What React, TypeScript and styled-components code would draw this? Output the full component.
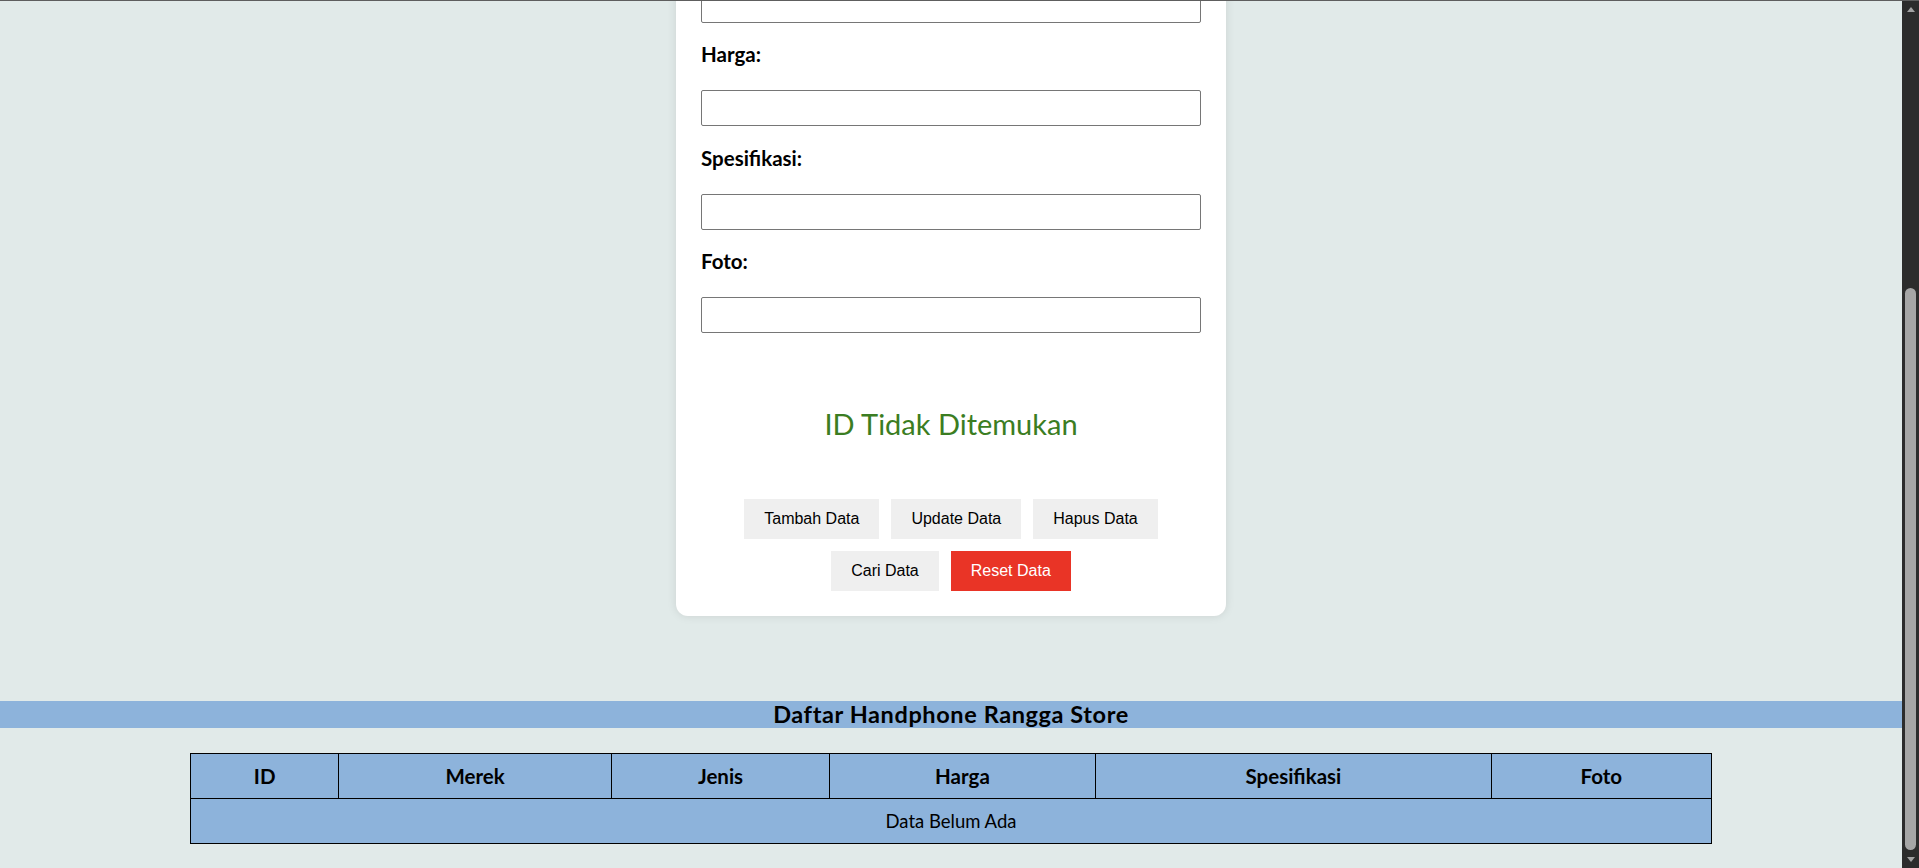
import React from "react";
import styled, { createGlobalStyle } from "styled-components";

const GlobalStyle = createGlobalStyle`
  html, body {
    margin: 0;
    height: 100%;
    background: #e1eae9;
  }
  body {
    font-family: Lato, "Open Sans", sans-serif;
    color: #000;
    overflow: hidden;
  }
  #root {
    height: 100%;
  }
  * {
    box-sizing: border-box;
  }
`;

/* Browser frame: the scrolled page on the left, a scrollbar on the right */
const Frame = styled.div`
  display: flex;
  height: 100vh;
  border-top: 1px solid #5e5e5e;
  overflow: hidden;
`;

/* Scrolled to the bottom: content is anchored at the lower edge */
const Viewport = styled.div`
  flex: 1;
  min-width: 0;
  display: flex;
  flex-direction: column;
  justify-content: flex-end;
  overflow: hidden;
`;

const Scrollbar = styled.div`
  width: 17px;
  flex-shrink: 0;
  display: flex;
  flex-direction: column;
  background: #2c2c2c;
`;

const ScrollArrow = styled.div<{ $down?: boolean }>`
  height: 17px;
  flex-shrink: 0;
  display: flex;
  align-items: center;
  justify-content: center;
  &::before {
    content: "";
    width: 0;
    height: 0;
    border-left: 4.5px solid transparent;
    border-right: 4.5px solid transparent;
    ${(p) =>
      p.$down
        ? "border-top: 5px solid #a3a3a3;"
        : "border-bottom: 5px solid #a3a3a3;"}
  }
`;

const ScrollTrack = styled.div`
  flex: 1;
  display: flex;
  flex-direction: column;
  justify-content: flex-end;
  padding: 0 3px 1px;
`;

const ScrollThumb = styled.div`
  width: 100%;
  background: #a6a6a6;
  border-radius: 6px;
`;

const Page = styled.main`
  flex-shrink: 0;
  display: flex;
  flex-direction: column;
  align-items: center;
  padding: 40px 0 24px;
`;

const Card = styled.section`
  width: 550px;
  padding: 25px;
  background: #ffffff;
  border-radius: 12px;
  box-shadow: 0 0 10px rgba(0, 0, 0, 0.1);
`;

const Field = styled.div`
  display: flex;
  flex-direction: column;
  & + & {
    margin-top: 19.5px;
  }
`;

const Label = styled.label`
  display: block;
  font-size: 20.5px;
  line-height: 24px;
  font-weight: 700;
  margin-bottom: 24px;
`;

const Input = styled.input`
  display: block;
  width: 100%;
  height: 36px;
  border: 1px solid #767676;
  border-radius: 2px;
  background: #fff;
  font-size: 16px;
  padding: 4px 8px;
`;

const Message = styled.p`
  margin: 73px 0 57px;
  text-align: center;
  font-size: 29px;
  line-height: 36px;
  font-weight: 400;
  color: #3b7d22;
`;

const ButtonGroup = styled.div`
  display: flex;
  flex-wrap: wrap;
  justify-content: center;
  gap: 12px;
`;

const ActionButton = styled.button<{ $danger?: boolean }>`
  border: none;
  padding: 11px 20px;
  font-family: "Liberation Sans", Arial, sans-serif;
  font-size: 16px;
  line-height: 18px;
  background: ${(p) => (p.$danger ? "#e93426" : "#efefef")};
  color: ${(p) => (p.$danger ? "#ffffff" : "#000000")};
  cursor: pointer;
`;

const SectionBar = styled.h2`
  align-self: stretch;
  margin: 85px 0 25px;
  background: #8db3db;
  text-align: center;
  font-size: 23.5px;
  letter-spacing: 0.6px;
  line-height: 27px;
  font-weight: 700;
  color: #000;
`;

const Table = styled.table`
  width: 80%;
  border-collapse: collapse;
  background: #8db3db;
  border: 1px solid #000;
`;

const HeadCell = styled.th<{ $w: string }>`
  width: ${(p) => p.$w};
  border: 1px solid #000;
  padding: 12px 8px;
  font-size: 20.5px;
  line-height: 20px;
  font-weight: 700;
  text-align: center;
`;

const EmptyCell = styled.td`
  border: 1px solid #000;
  padding: 12px 8px;
  font-size: 18.5px;
  line-height: 20px;
  text-align: center;
`;

const fields = ["Jenis", "Harga", "Spesifikasi", "Foto"];

const columns: { name: string; w: string }[] = [
  { name: "ID", w: "9.73%" },
  { name: "Merek", w: "17.95%" },
  { name: "Jenis", w: "14.33%" },
  { name: "Harga", w: "17.49%" },
  { name: "Spesifikasi", w: "26.04%" },
  { name: "Foto", w: "14.46%" },
];

export default function App() {
  return (
    <>
      <GlobalStyle />
      <Frame>
        <Viewport>
          <Page>
            <Card>
              {fields.map((f) => (
                <Field key={f}>
                  <Label htmlFor={`field-${f}`}>{f}:</Label>
                  <Input id={`field-${f}`} type="text" />
                </Field>
              ))}
              <Message>ID Tidak Ditemukan</Message>
              <ButtonGroup>
                <ActionButton>Tambah Data</ActionButton>
                <ActionButton>Update Data</ActionButton>
                <ActionButton>Hapus Data</ActionButton>
                <ActionButton>Cari Data</ActionButton>
                <ActionButton $danger>Reset Data</ActionButton>
              </ButtonGroup>
            </Card>
            <SectionBar>Daftar Handphone Rangga Store</SectionBar>
            <Table>
              <thead>
                <tr>
                  {columns.map((c) => (
                    <HeadCell key={c.name} $w={c.w}>
                      {c.name}
                    </HeadCell>
                  ))}
                </tr>
              </thead>
              <tbody>
                <tr>
                  <EmptyCell colSpan={6}>Data Belum Ada</EmptyCell>
                </tr>
              </tbody>
            </Table>
          </Page>
        </Viewport>
        <Scrollbar aria-hidden="true">
          <ScrollArrow />
          <ScrollTrack>
            <ScrollThumb style={{ height: "67.5%" }} />
          </ScrollTrack>
          <ScrollArrow $down />
        </Scrollbar>
      </Frame>
    </>
  );
}
